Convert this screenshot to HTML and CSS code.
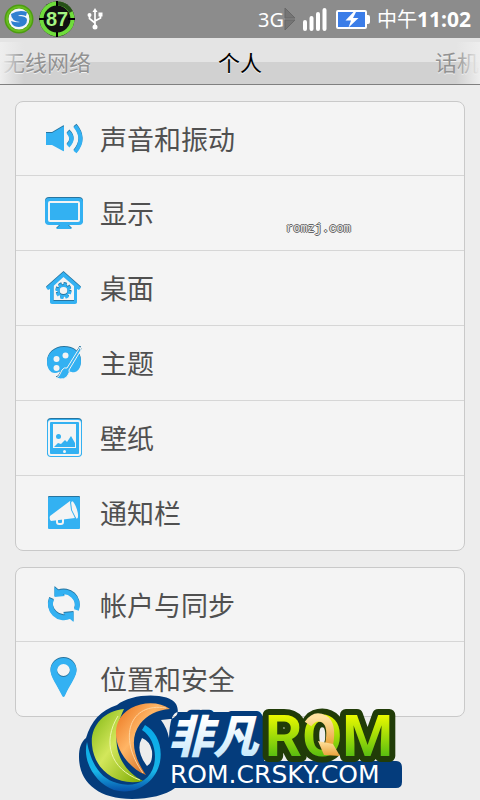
FILE: index.html
```html
<!DOCTYPE html>
<html lang="zh-CN">
<head>
<meta charset="utf-8">
<meta name="viewport" content="width=device-width, initial-scale=1">
<title>个人</title>
<link rel="stylesheet" href="styles.css">
</head>
<body>
<header class="status">
  <div class="status-side">
    <svg class="ic-app" width="30" height="30" viewBox="0 0 30 30" aria-hidden="true">
      <circle cx="15" cy="15" r="14.5" fill="#4c9d10"/>
      <circle cx="15" cy="15" r="12" fill="none" stroke="#69bd20" stroke-width="2"/>
      <circle cx="15" cy="15" r="10.5" fill="#f4f6fa"/>
      <path d="M7 10q8-5 16-2l-1 4q-6-2-8 0 9 0 9 4 0 6-8 7-5 0-7-3l-1-3q6 2 9 1-9-1-9-8z" fill="#2f7fd0"/>
    </svg>
    <svg class="ic-level" width="36" height="38" viewBox="0 0 36 38" aria-hidden="true">
      <circle cx="18" cy="19" r="17.500" fill="#111"/>
      <circle cx="18" cy="19" r="15.500" fill="none" stroke="#6fdc3c" stroke-width="4"/>
      <path d="M18 3.500A15.500 15.500 0 0 1 32 12" fill="none" stroke="#275018" stroke-width="4"/>
      <path d="M18 1v5M18 32v5M0 19h7M29 19h7" stroke="#000" stroke-width="2"/>
      <text x="18" y="26" text-anchor="middle" class="level-text">87</text>
    </svg>
    <svg width="16" height="22" viewBox="0 0 16 22" fill="none" stroke="#fff" stroke-width="1.700" aria-hidden="true">
      <path d="M8 3v16M2.500 7v3.500L8 15M13.500 6v4L8 13"/>
      <path d="M8 0l2.500 4h-5z" fill="#fff" stroke="none"/>
      <circle cx="8" cy="19" r="2.500" fill="#fff" stroke="none"/>
      <circle cx="2.500" cy="7" r="2" fill="#fff" stroke="none"/>
      <path d="M11.500 4.500h4v4h-4z" fill="#fff" stroke="none"/>
    </svg>
  </div>
  <div class="status-side status-right">
    <span class="net">3G</span>
    <svg width="12" height="22" viewBox="0 0 12 22" aria-hidden="true"><path d="M1 0l10 10H1zM1 12h10L1 22z" fill="#757575" stroke="#686868"/></svg>
    <svg class="ic-signal" width="24" height="25" viewBox="0 0 24 25" stroke="#fff" stroke-width="4" stroke-linecap="round" aria-hidden="true"><path d="M2 15v7M8.500 11v11M15 7v15M21.500 3v19"/></svg>
    <svg class="ic-battery" width="34" height="19" viewBox="0 0 34 19" aria-hidden="true">
      <path d="M2 0h27q2 0 2 2v3h1q2 0 2 2v5q0 2-2 2h-1v3q0 2-2 2H2q-2 0-2-2V2q0-2 2-2z" fill="#fff"/>
      <path d="M2 2h27v15H2z" fill="#3b7de8"/>
      <path d="M18 1.500L9.500 10.500h5.500L12.500 17.500l10-9.500H17l3-6z" fill="#fff"/>
    </svg>
    <span class="clock"><span>中午</span><b>11:02</b></span>
  </div>
</header>

<nav class="tabs">
  <button type="button" class="tab">无线网络</button>
  <button type="button" class="tab tab-current">个人</button>
  <button type="button" class="tab tab-last">话机</button>
</nav>

<main class="content">
  <ul class="panel">
    <li><a class="row" href="#sound">
      <svg class="icon" viewBox="0 0 40 40"><path d="M2 14h6L19 7.500q1-.5 1 .5v23.500q0 1-1 .5L8 26H2z"/><path d="M24 13q7 7 0 14M31 7q11 13 0 26" class="line wide"/></svg>
      <span>声音和振动</span></a></li>
    <li><a class="row" href="#display">
      <svg class="icon" viewBox="0 0 40 40"><rect x="1" y="5" width="38" height="27" rx="4"/><rect x="5" y="9" width="30" height="19" rx="1" class="gap"/><path d="M16 32h8l4 4H12z"/></svg>
      <span>显示</span></a></li>
    <li><a class="row" href="#desktop">
      <svg class="icon" viewBox="0 0 40 40"><path fill-rule="evenodd" d="M19.500 4L37 19.500 35 22l-2-1v13q0 2-2 2H8q-2 0-2-2V21l-2 1-2-2.500zM19.500 9L9.500 18v15h20.500V18z"/><circle cx="19.500" cy="23" r="6.500" class="line cog-teeth"/><circle cx="19.500" cy="23" r="5" class="line cog"/></svg>
      <span>桌面</span></a></li>
    <li><a class="row" href="#theme">
      <svg class="icon" viewBox="0 0 40 40"><path d="M20 4C10 4 3 11 3 19c0 6 3 11 8 11 4 0 6-3 9-1 2 2 3 2 5 0 2-1 3 1 6 0 4-1 6-6 6-11C37 10 30 4 20 4z"/><g class="hole"><circle cx="12.500" cy="16" r="3"/><circle cx="21.500" cy="12.500" r="3"/><circle cx="12.500" cy="25" r="3"/></g><path class="brush" d="M36 4L23 25q-3-1-5 2l-2 4q-1 3-4 4 9 3 12-3 2-3 1-5L37 7z"/></svg>
      <span>主题</span></a></li>
    <li><a class="row" href="#wallpaper">
      <svg class="icon" viewBox="0 0 40 40"><rect x="3" y="1" width="35" height="38" rx="4"/><rect x="5" y="3" width="31" height="34" rx="2" class="gap"/><path class="hole" d="M9 6h23v24H9z"/><circle cx="14.500" cy="18.500" r="2.500"/><path d="M10 29l4-4 3 1 4-4 2 2 4-6 4 7v4z"/><circle cx="20.500" cy="33.500" r="1.500" class="hole"/></svg>
      <span>壁纸</span></a></li>
    <li><a class="row" href="#notifications">
      <svg class="icon" viewBox="0 0 40 40"><rect x="4" y="4" width="32" height="32" rx="1"/><g class="hole"><path d="M26 8L6 23q-1 3 1 5l24-3z"/><ellipse cx="30.500" cy="17" rx="2.500" ry="9" transform="rotate(-17 30.500 17)"/></g><path d="M13 27v2q0 2 2 2h2q2 0 2-2v-3" class="handle"/><path d="M26.500 9q-.5 8 5 16" class="line seam"/></svg>
      <span>通知栏</span></a></li>
  </ul>
  <ul class="panel">
    <li><a class="row" href="#accounts">
      <svg class="icon" viewBox="0 0 40 40"><path class="line sync" d="M14.500 8A13.500 13.500 0 0 1 32.500 25M25.500 31.500A13.500 13.500 0 0 1 7.500 14"/><path d="M10.500 2v10l10.500-1zM29.500 37V27L19 28z"/></svg>
      <span>帐户与同步</span></a></li>
    <li><a class="row" href="#location">
      <svg class="icon" viewBox="0 0 40 40"><path fill-rule="evenodd" d="M19.500-1C12-1 6.500 5 6.500 11.500c0 6 6 14 11.500 25q1.500 3 3 0C26 25.500 32.500 18 32.500 11.500 32.500 5 27-1 19.500-1zm0 6a6.500 6.500 0 1 1 0 13 6.500 6.500 0 0 1 0-13z"/></svg>
      <span>位置和安全</span></a></li>
  </ul>
</main>

<span class="mark">romzj.com</span>

<svg class="logo" width="326" height="106" viewBox="0 0 326 106" role="img" aria-label="非凡ROM ROM.CRSKY.COM">
  <defs>
    <linearGradient id="orange" x1="0" y1="0" x2="1" y2="1"><stop offset="0" stop-color="#e86f18"/><stop offset=".4" stop-color="#ffb565"/><stop offset="1" stop-color="#b94800"/></linearGradient>
    <linearGradient id="lime" x1="0" y1="0" x2="1" y2="1"><stop offset="0" stop-color="#7db510"/><stop offset=".45" stop-color="#d3e75b"/><stop offset="1" stop-color="#7aa900"/></linearGradient>
    <linearGradient id="sky" x1="0" y1="0" x2="0" y2="1"><stop offset="0" stop-color="#08a8e8"/><stop offset=".7" stop-color="#18b5e8"/><stop offset="1" stop-color="#0750a8"/></linearGradient>
    <linearGradient id="ice" x1="0" y1="0" x2="0" y2="1"><stop offset=".3" stop-color="#fff"/><stop offset="1" stop-color="#b9e3fb"/></linearGradient>
    <linearGradient id="green" x1="0" y1="0" x2="0" y2="1"><stop offset=".2" stop-color="#e9f900"/><stop offset=".8" stop-color="#58bd10"/></linearGradient>
    <linearGradient id="gold" x1="0" y1="0" x2="0" y2="1"><stop offset="0" stop-color="#ffe3a0"/><stop offset="1" stop-color="#e9a13a"/></linearGradient>
  </defs>
  <path fill="#043c7c" fill-rule="evenodd" d="M39 11C53-1 91-2 98 10c4 8 1 14-6 15l-9 1q6 8 8 18 1-26 9-26h78q6 0 8 7v42h132q6 0 6 7v14q0 6-6 6H97C88 101 71 105 54 105 20 105 1 88 1 63c0-9 2-15 7-19 5-17 15-28 31-33zM64 44q-7 12 5 28 6-3 5-15-2-10-10-13z"/>
  <path fill="url(#sky)" d="M9 48c-5 19 8 41 27 48 22 6 42-8 46-28C85 51 78 37 67 31l-3 5c11 7 15 22 12 35-4 17-21 23-37 18C23 85 13 70 9 48z"/>
  <path fill="url(#lime)" d="M46 15C25 17 12 33 14 51c2 25 25 42 51 36C43 76 29 50 46 15z"/>
  <path fill="url(#orange)" d="M92 15C77 4 48 9 40 28c-8 20 8 45 28 53-12-17-17-36-6-51 7-9 17-14 30-15z"/>
  <path fill="none" stroke="#edf6a9" d="M40 22C24 48 32 75 62 86"/>
  <path fill="none" stroke="#ffd49e" d="M88 14C52 8 39 43 65 79"/>
  <text class="logo-cn" x="90" y="59">非凡</text>
  <text class="logo-rom" x="187" y="62">ROM</text>
  <path fill="none" stroke="url(#gold)" stroke-width="8" d="M230 30q7-10 16-5 9 5 5 26"/>
  <path fill="url(#gold)" d="M240 47l15 3 7 12-16-1z"/>
  <text class="logo-url" x="92" y="89">ROM.CRSKY.COM</text>
</svg>
</body>
</html>
```
FILE: styles.css
```css
* { box-sizing: border-box; }
body {
  position: relative;
  min-height: 100vh;
  margin: 0;
  background: #ededed;
  color: #505050;
  font-family: "Noto Sans", "Noto Sans CJK SC", sans-serif;
  overflow-x: hidden;
}
.status {
  display: flex;
  justify-content: space-between;
  height: 38px;
  padding: 0 9px 0 4px;
  background: #8c8c8c;
  color: #fff;
}
.status-side { display: flex; align-items: center; }
.ic-level { margin: 0 12px 0 5px; }
.net { font: 20px "Noto Sans", sans-serif; }
.ic-signal { margin: 0 9px 0 7px; }
.ic-battery { margin-right: 7px; }
.clock { display: flex; align-items: center; font-size: 20px; line-height: 38px; }
.clock span { font-family: "Noto Sans CJK SC", sans-serif; }
.clock b { font-size: 21px; }
.level-text { font: bold 20px "Liberation Sans", sans-serif; fill: #a4f582; }

.tabs {
  position: relative;
  display: grid;
  grid-template-columns: 1fr auto 1fr;
  height: 47px;
  border-bottom: 1px solid #808080;
  background: linear-gradient(#e4e4e4 24px, #d1d1d1 24px);
}
.tabs::before, .tabs::after {
  content: "";
  position: absolute;
  top: 4px;
  bottom: 0;
  width: 24px;
  pointer-events: none;
}
.tabs::before { left: 0; background: linear-gradient(90deg, #eee, #eee0); }
.tabs::after { right: 0; background: linear-gradient(270deg, #eee, #eee0); }
.tab {
  padding: 0 0 0 3px;
  border: 0;
  background: none;
  color: #929292;
  font: 22px/44px "Noto Sans CJK SC", sans-serif;
  text-align: left;
  text-shadow: 0 1px #f2f2f2;
}
.tab-current { padding: 0; color: #000; }
.tab-last { padding: 0 1px 0 0; text-align: right; }

.content { display: grid; gap: 16px; padding: 16px 15px; }
.panel {
  margin: 0;
  padding: 0;
  border: 1px solid #c9c9c9;
  border-radius: 8px;
  background: #f4f4f4;
  list-style: none;
}
.panel li + li { border-top: 1px solid #d6d6d6; }
.row {
  display: flex;
  align-items: center;
  gap: 16px;
  height: 74px;
  padding: 0 28px;
  color: inherit;
  font: 27px/40px "Noto Sans CJK SC", sans-serif;
  text-decoration: none;
}
.panel li:first-child .row { height: 73px; }
.icon {
  width: 40px;
  height: 40px;
  overflow: visible;
  fill: #33b1f2;
  filter: drop-shadow(0 -1px 0 #27749f);
}
.line { fill: none; stroke: #33b1f2; stroke-width: 3; }
.wide { stroke-width: 4; }
.sync { stroke-width: 5; }
.cog { stroke-width: 2; }
.cog-teeth { stroke-width: 3; stroke-dasharray: 3 2; }
.gap { stroke: #f4f4f4; stroke-width: 2; }
.hole { fill: #f4f4f4; }
.brush { stroke: #f4f4f4; stroke-width: 1; }
.handle { fill: none; stroke: #f4f4f4; stroke-width: 2; }
.seam { stroke-width: 1; }

.mark {
  position: absolute;
  top: 221px;
  left: 286px;
  color: #eee;
  font: 12px/16px "Liberation Mono", monospace;
  text-shadow: 1px 0 #666, -1px 0 #666, 0 1px #666, 0 -1px #666;
}
.logo {
  position: absolute;
  top: 694px;
  left: calc(50% - 162px);
}
.logo text { paint-order: stroke; stroke-linejoin: round; }
.logo-cn {
  font: italic 900 45px "Noto Sans CJK SC", sans-serif;
  fill: url(#ice);
  stroke: #043c7c;
  stroke-width: 10px;
}
.logo-rom {
  font: bold 58px Roboto, sans-serif;
  fill: url(#green);
  stroke: #213c08;
  stroke-width: 12px;
}
.logo .logo-url {
  font: 25px "DejaVu Sans", sans-serif;
  fill: #fff;
}
```
